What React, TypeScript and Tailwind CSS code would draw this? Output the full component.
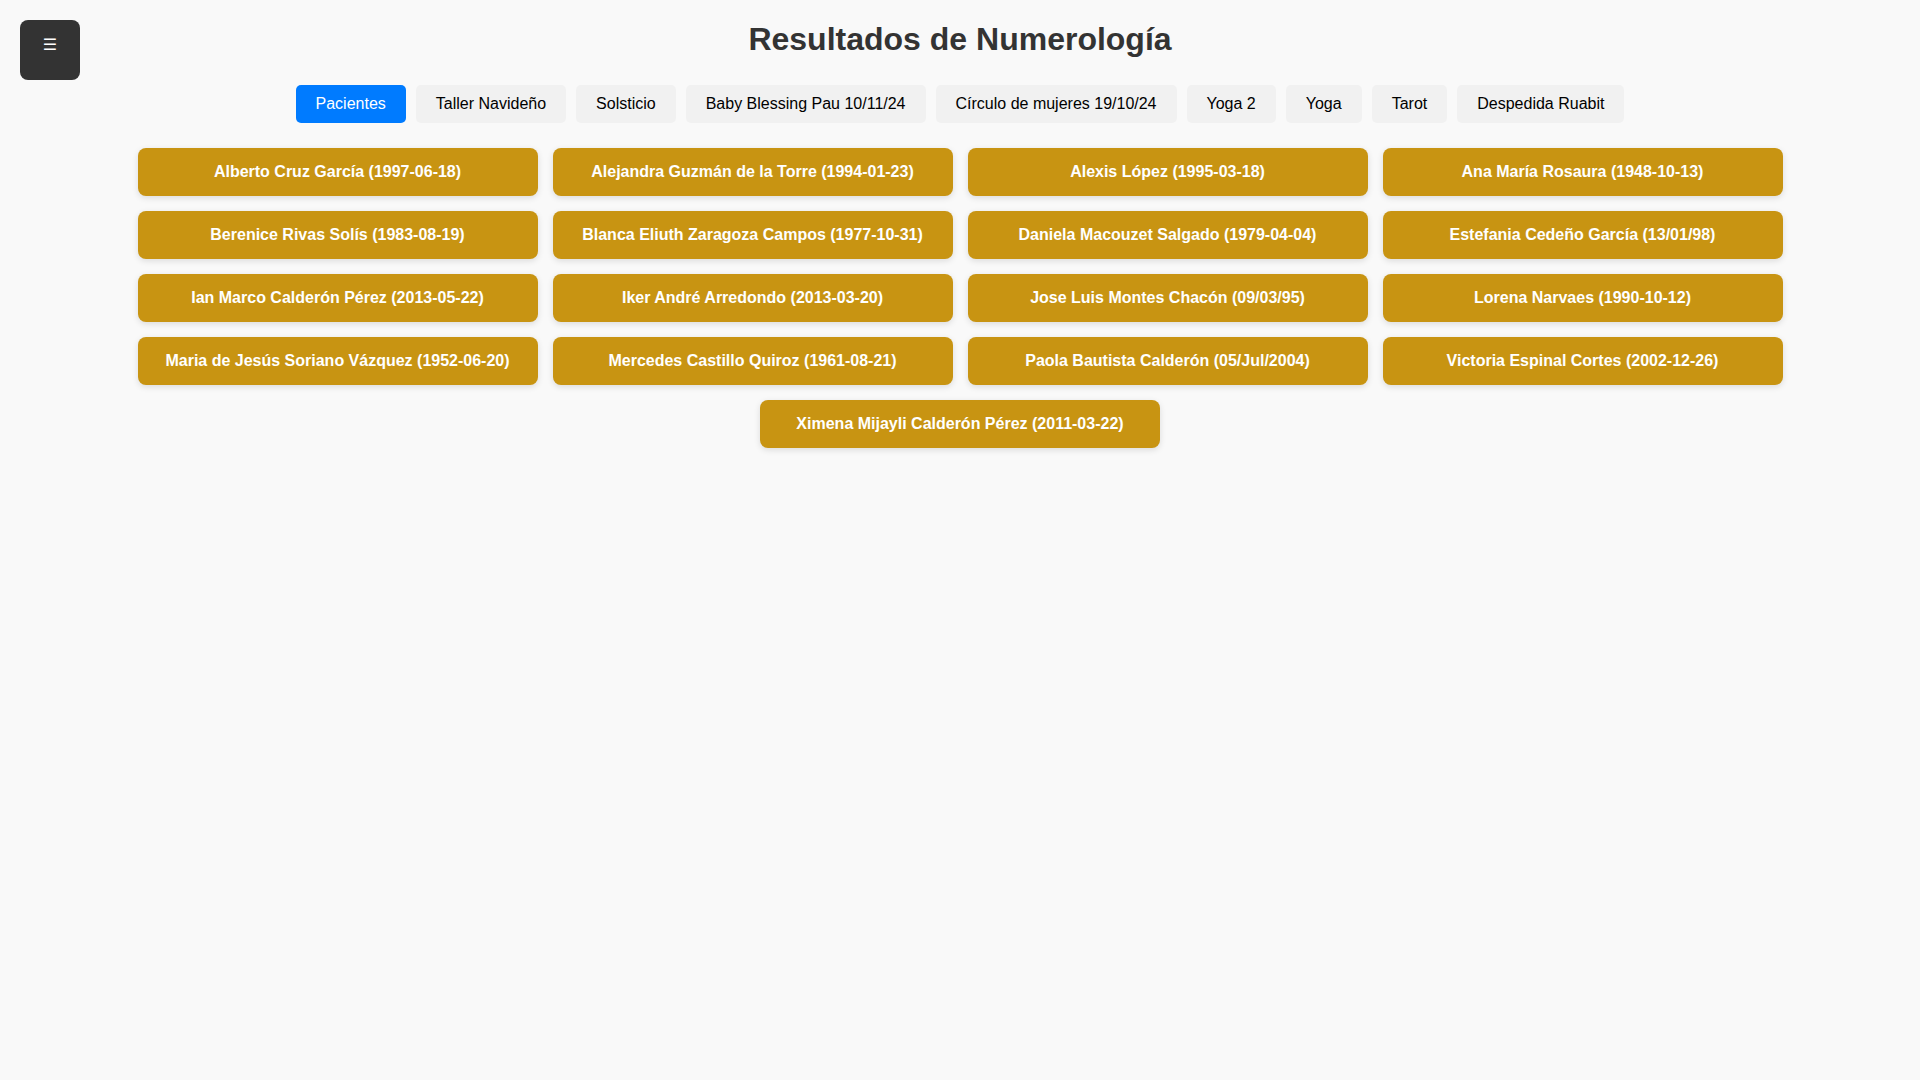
import React from "react";

const tabs = [
  "Pacientes",
  "Taller Navideño",
  "Solsticio",
  "Baby Blessing Pau 10/11/24",
  "Círculo de mujeres 19/10/24",
  "Yoga 2",
  "Yoga",
  "Tarot",
  "Despedida Ruabit",
];

const people = [
  "Alberto Cruz García (1997-06-18)",
  "Alejandra Guzmán de la Torre (1994-01-23)",
  "Alexis López (1995-03-18)",
  "Ana María Rosaura (1948-10-13)",
  "Berenice Rivas Solís (1983-08-19)",
  "Blanca Eliuth Zaragoza Campos (1977-10-31)",
  "Daniela Macouzet Salgado (1979-04-04)",
  "Estefania Cedeño García (13/01/98)",
  "Ian Marco Calderón Pérez (2013-05-22)",
  "Iker André Arredondo (2013-03-20)",
  "Jose Luis Montes Chacón (09/03/95)",
  "Lorena Narvaes (1990-10-12)",
  "Maria de Jesús Soriano Vázquez (1952-06-20)",
  "Mercedes Castillo Quiroz (1961-08-21)",
  "Paola Bautista Calderón (05/Jul/2004)",
  "Victoria Espinal Cortes (2002-12-26)",
  "Ximena Mijayli Calderón Pérez (2011-03-22)",
];

export default function App() {
  return (
    <div
      className="min-h-screen w-full bg-[#f9f9f9] text-[#333]"
      style={{ fontFamily: '"Liberation Sans", Arial, sans-serif' }}
    >
      <div className="fixed left-[20px] top-[20px] flex h-[60px] w-[60px] justify-center rounded-[8px] bg-[#333] pt-[13px] text-[16px] leading-[24px] text-white">
        <span style={{ fontFamily: '"DejaVu Sans", sans-serif' }}>☰</span>
      </div>

      <h1 className="m-0 pt-[21px] text-center text-[32px] font-bold leading-[36px] text-[#333]">
        Resultados de Numerología
      </h1>

      <div className="mt-[28px] flex flex-wrap justify-center gap-[10px]">
        {tabs.map((t, i) => (
          <button
            key={t}
            className={
              i === 0
                ? "rounded-[5px] bg-[#007bff] px-[20px] py-[10px] text-[16px] leading-[18px] text-white"
                : "rounded-[5px] bg-[#f1f1f1] px-[20px] py-[10px] text-[16px] leading-[18px] text-black"
            }
          >
            {t}
          </button>
        ))}
      </div>

      <div className="mt-[25px] flex flex-wrap justify-center gap-[15px]">
        {people.map((p) => (
          <div
            key={p}
            className="flex h-[48px] w-[400px] items-center justify-center rounded-[8px] bg-[#c89412] text-[16px] font-bold text-white shadow-[0_2px_6px_rgba(0,0,0,0.12)]"
          >
            {p}
          </div>
        ))}
      </div>
    </div>
  );
}
